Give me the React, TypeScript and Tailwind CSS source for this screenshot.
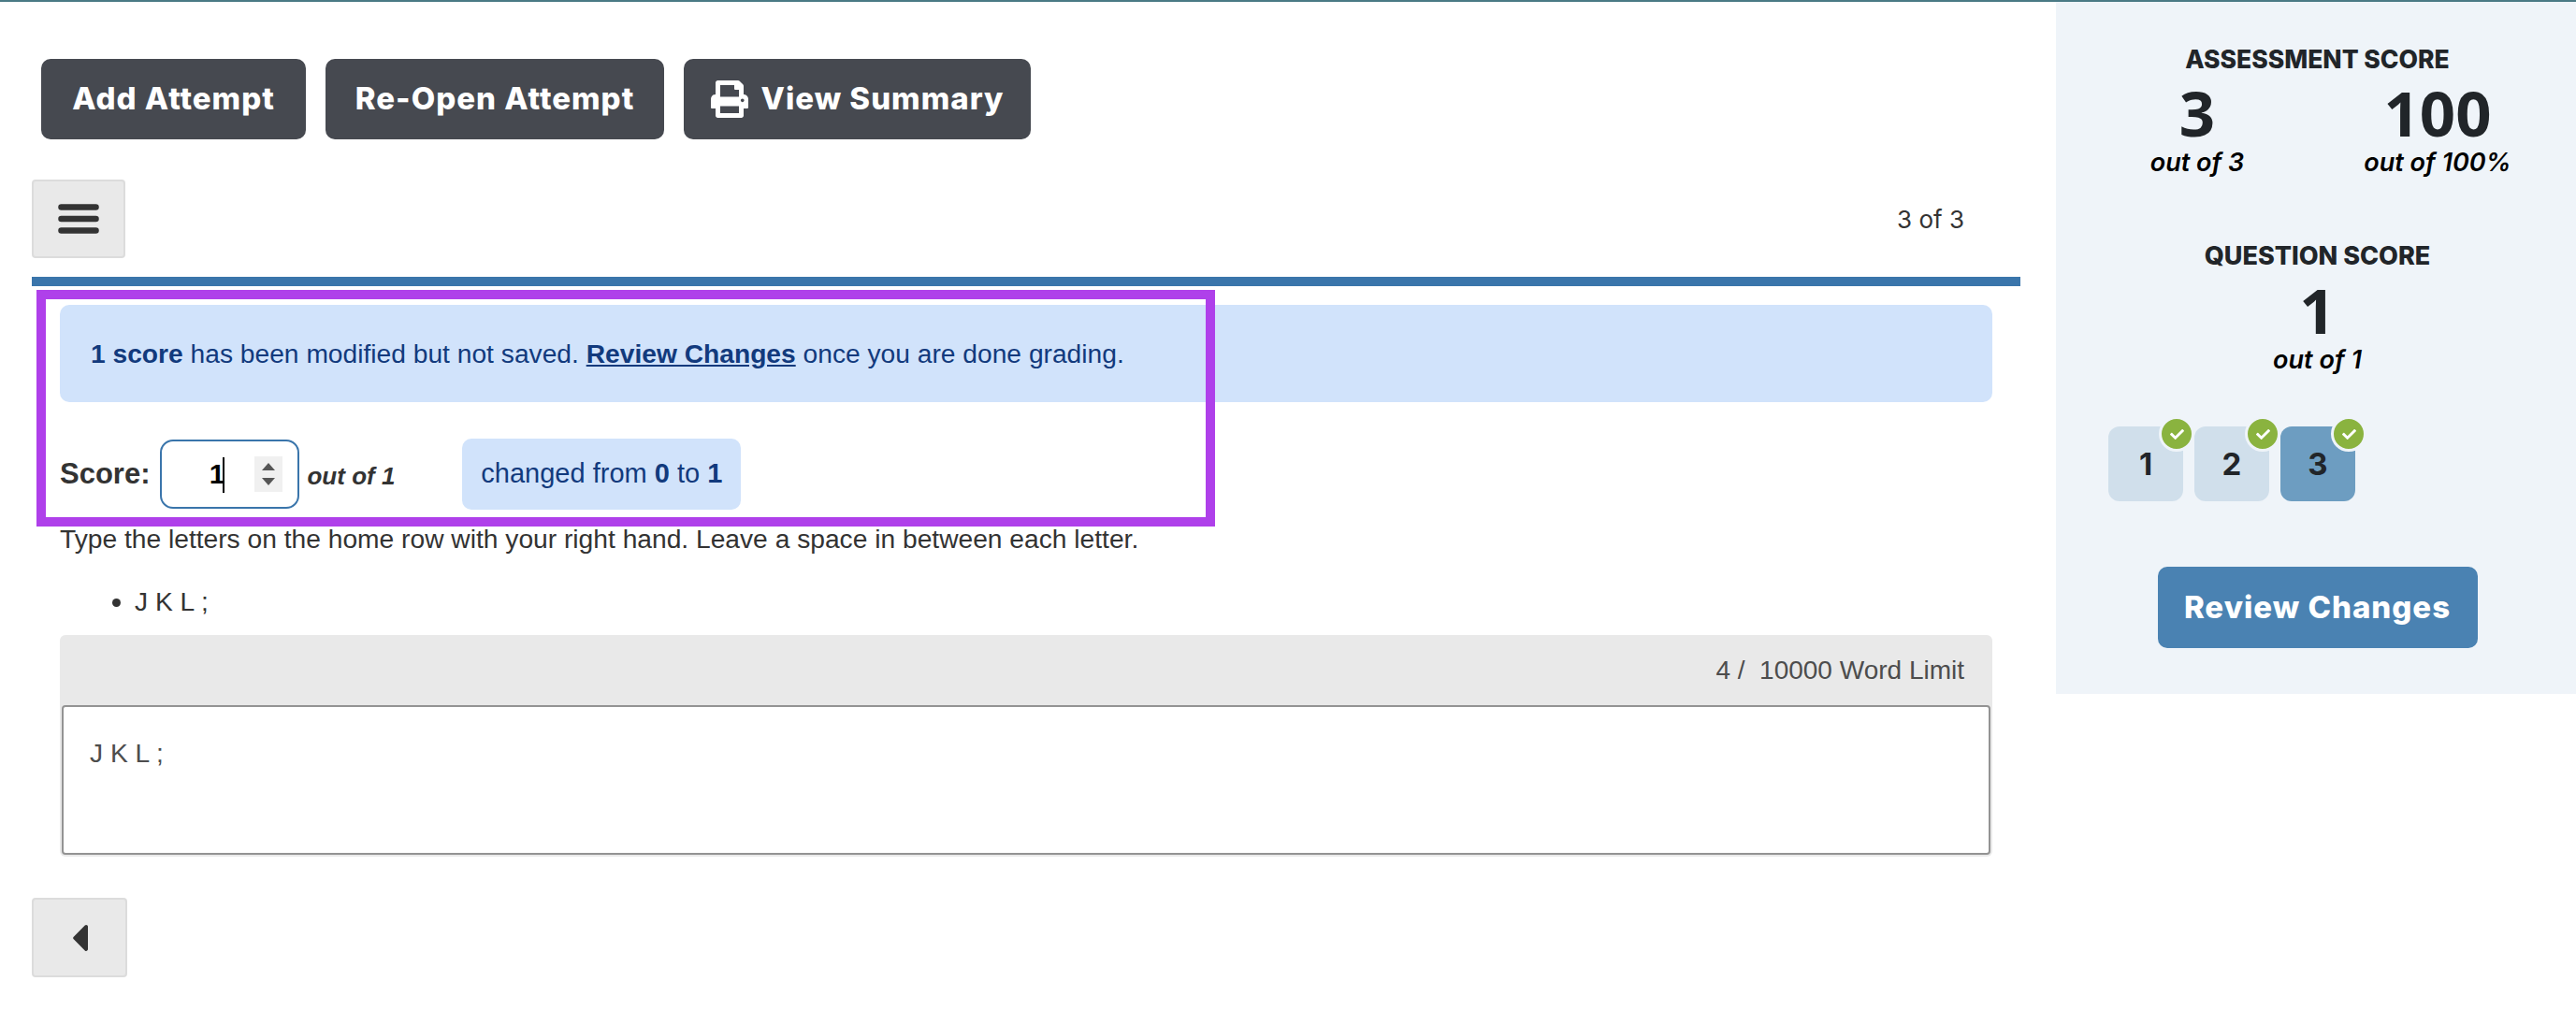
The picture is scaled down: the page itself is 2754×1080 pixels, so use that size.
import React from "react";
import { FaPrint, FaCaretLeft, FaCheck } from "react-icons/fa";

const sans = "font-['Liberation_Sans',Arial,sans-serif]";
const head = "font-['Inter',sans-serif]";

function DarkButton({ children, className }: { children: React.ReactNode; className: string }) {
  return (
    <button className={`flex h-[86px] items-center justify-center rounded-[10px] bg-[#464950] text-[33px] font-extrabold tracking-[1px] text-white ${head} ${className}`}>
      {children}
    </button>
  );
}

function QuestionChip({ n, active }: { n: number; active?: boolean }) {
  return (
    <div className={`relative flex h-[80px] w-[80px] items-center justify-center rounded-[12px] text-[33px] font-bold text-[#212529] ${head} ${active ? "bg-[#6d9dc1]" : "bg-[#d0dfeb]"}`}>
      <span className="pt-[2px]">{n}</span>
      <span className="absolute right-[-12px] top-[-11px] box-content flex h-[32px] w-[32px] items-center justify-center rounded-full border-[3px] border-[#eff4f9] bg-[#8ab33f] text-white">
        <FaCheck size={15} />
      </span>
    </div>
  );
}

function ScoreCell({ value, label }: { value: string; label: string }) {
  return (
    <div>
      <div className="mt-[6px] text-[67px] font-bold leading-[72px] font-['Open_Sans',sans-serif]">{value}</div>
      <div className="mt-[3px] text-[27px] font-semibold italic leading-[30px] text-black">{label}</div>
    </div>
  );
}

export default function App() {
  return (
    <div className={`min-h-[1080px] bg-white text-[#333333] ${sans}`}>
      <div className="h-[2px] bg-[#4a7a85]" />
      <div className="flex items-start">
        <main className="w-[2198px] shrink-0 pl-[34px]">
          <div className="ml-[10px] mt-[61px] flex gap-[21px]">
            <DarkButton className="w-[283px]">Add Attempt</DarkButton>
            <DarkButton className="w-[362px]">Re-Open Attempt</DarkButton>
            <DarkButton className="w-[371px] gap-[14px]">
              <FaPrint size={40} />
              View Summary
            </DarkButton>
          </div>

          <div className="mt-[43px] flex w-[2126px] items-center justify-between pr-[60px]">
            <button className="flex h-[84px] w-[100px] items-center justify-center rounded-[4px] border-2 border-[#dcdcdc] bg-[#e9e9e9]">
              <svg width="44" height="32" viewBox="0 0 44 32" aria-hidden="true">
                <g stroke="#333333" strokeWidth="6.5" strokeLinecap="round">
                  <line x1="3.5" y1="3.5" x2="40.5" y2="3.5" />
                  <line x1="3.5" y1="16" x2="40.5" y2="16" />
                  <line x1="3.5" y1="28.5" x2="40.5" y2="28.5" />
                </g>
              </svg>
            </button>
            <span className="text-[26px] text-[#333333] font-['Inter',sans-serif]">3 of 3</span>
          </div>

          <div className="mt-[20px] h-[10px] w-[2126px] bg-[#3a75ab]" />

          <div className="w-[2126px] px-[30px]">
            <div className="relative pt-[20px]">
              <div className="pointer-events-none absolute left-[-25px] top-[4px] h-[253px] w-[1260px] border-[10px] border-[#af40ea]" />
              <div className="flex h-[104px] items-center rounded-[10px] bg-[#d1e3fb] pl-[33px] text-[28.2px] text-[#123a7d]">
                <p>
                  <strong>1 score</strong> has been modified but not saved.{" "}
                  <strong className="underline">Review Changes</strong> once you are done grading.
                </p>
              </div>
              <div className="mt-[39px] flex h-[76px] items-center">
                <span className="text-[31px] font-bold">Score:</span>
                <div className="relative ml-[11px] h-[74px] w-[149px] rounded-[14px] border-2 border-[#3a75ab] bg-white">
                  <span className="absolute right-[78px] top-[16px] text-[30px] font-bold leading-[38px] text-black">1</span>
                  <span className="absolute left-[65px] top-[17px] h-[38px] w-[2px] bg-black" />
                  <div className="absolute left-[99px] top-[16px] flex h-[38px] w-[30px] flex-col items-center justify-center gap-[8px] bg-[#f0f0f0]">
                    <span className="h-0 w-0 border-x-[7px] border-b-[8px] border-x-transparent border-b-[#555555]" />
                    <span className="h-0 w-0 border-x-[7px] border-t-[8px] border-x-transparent border-t-[#555555]" />
                  </div>
                </div>
                <span className="ml-[8px] pt-[4px] text-[26px] font-bold italic">out of 1</span>
                <div className="ml-[72px] flex h-[76px] w-[298px] items-center justify-center rounded-[10px] bg-[#d1e3fb] text-[29px] text-[#123a7d]">
                  <span>
                    changed from <strong>0</strong> to <strong>1</strong>
                  </span>
                </div>
              </div>
            </div>

            <p className="mt-[15px] text-[28.2px] leading-[32px]">
              Type the letters on the home row with your right hand. Leave a space in between each letter.
            </p>
            <ul className="mt-[35px] list-disc pl-[80px] text-[28.2px] leading-[32px]">
              <li>J K L ;</li>
            </ul>

            <div className="mt-[20px] rounded-[6px] bg-[#e9e9e9] px-[2px] pb-[2px]">
              <div className="flex h-[75px] items-center justify-end pr-[28px] text-[28px] text-[#4d4d4d]">4 /&nbsp; 10000 Word Limit</div>
              <div className="h-[160px] rounded-[4px] border-2 border-[#939393] bg-white px-[28px] py-[33px] text-[28.2px] leading-[32px] text-[#4d4d4d]">
                J K L ;
              </div>
            </div>
          </div>

          <button className="mt-[44px] flex h-[85px] w-[102px] items-center justify-center rounded-[4px] border-2 border-[#dcdcdc] bg-[#e9e9e9] text-[#333333]">
            <FaCaretLeft size={48} />
          </button>
        </main>

        <aside className={`h-[740px] w-[556px] bg-[#eff4f9] text-[#212529] ${head}`}>
          <div className="flex flex-col items-center pl-[3px] pt-[46px]">
            <h2 className="text-[26.5px] font-extrabold leading-[30px]">ASSESSMENT SCORE</h2>
            <div className="grid w-[514px] grid-cols-2 text-center">
              <ScoreCell value="3" label="out of 3" />
              <ScoreCell value="100" label="out of 100%" />
            </div>
            <h2 className="mt-[70px] text-[27px] font-extrabold leading-[30px]">QUESTION SCORE</h2>
            <div className="text-center">
              <ScoreCell value="1" label="out of 1" />
            </div>
          </div>
          <div className="ml-[56px] mt-[56px] flex gap-[12px]">
            <QuestionChip n={1} />
            <QuestionChip n={2} />
            <QuestionChip n={3} active />
          </div>
          <div className="mt-[70px] flex justify-center pl-[3px]">
            <button className="h-[87px] w-[342px] rounded-[10px] bg-[#4a82b2] text-[33px] font-extrabold tracking-[1px] text-white">Review Changes</button>
          </div>
        </aside>
      </div>
    </div>
  );
}
